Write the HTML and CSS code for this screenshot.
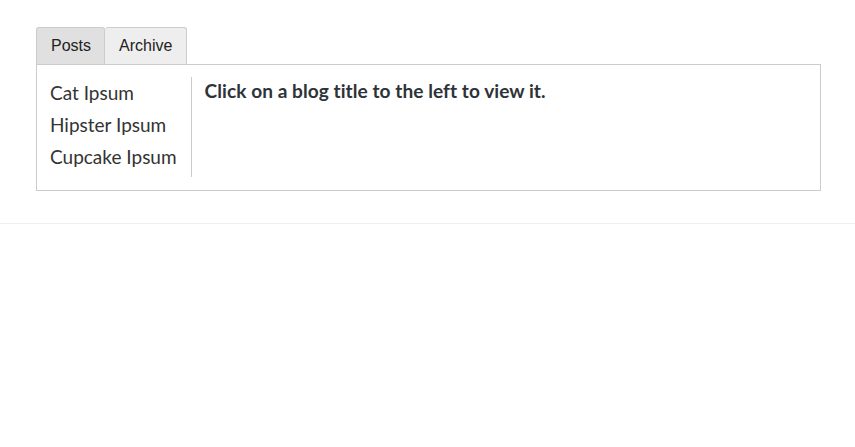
FILE: index.html
```html
<!DOCTYPE html>
<html>
<head>
<meta charset="utf-8">
<link rel="stylesheet" href="styles.css">
</head>
<body>
<div class="page">
  <div class="tabs">
    <div class="tab active">Posts</div>
    <div class="tab">Archive</div>
  </div>
  <div class="panel">
    <ul class="posts">
      <li>Cat Ipsum</li>
      <li>Hipster Ipsum</li>
      <li>Cupcake Ipsum</li>
    </ul>
    <div class="viewer">
      <h4 class="hint">Click on a blog title to the left to view it.</h4>
    </div>
  </div>
</div>
<div class="rule"></div>
</body>
</html>
```
FILE: styles.css
```css
html, body {
  margin: 0;
  padding: 0;
  background: #fff;
}
.page {
  padding: 27px 34px 0 36px;
}
.tabs {
  display: flex;
}
.tab {
  font-family: "Liberation Sans", Arial, sans-serif;
  font-size: 16px;
  line-height: 18px;
  color: #222;
  padding: 9px 14px 9px 14px;
  border: 1px solid #ccc;
  border-bottom: none;
  border-radius: 3px 3px 0 0;
  background: #eee;
}
.tab.active {
  background: #e0e0e0;
  padding-right: 13px;
}
.tab + .tab {
  border-left: none;
}
.panel {
  display: flex;
  align-items: flex-start;
  border: 1px solid #ccc;
  padding: 12px 13px 13px 13px;
  font-family: Lato, "Open Sans", sans-serif;
  font-variant-ligatures: none;
  color: #333;
}
.posts {
  list-style: none;
  margin: 0;
  padding: 0 14px 4px 0;
  border-right: 1px solid #ccc;
}
.posts li {
  font-size: 19px;
  line-height: 32px;
}
.viewer {
  padding-left: 13px;
}
.hint {
  margin: 0;
  font-size: 19.1px;
  letter-spacing: 0.05px;
  line-height: 28px;
  font-weight: bold;
  color: #2e3338;
}
.rule {
  margin-top: 32px;
  border-top: 1px solid #eee;
}
```
